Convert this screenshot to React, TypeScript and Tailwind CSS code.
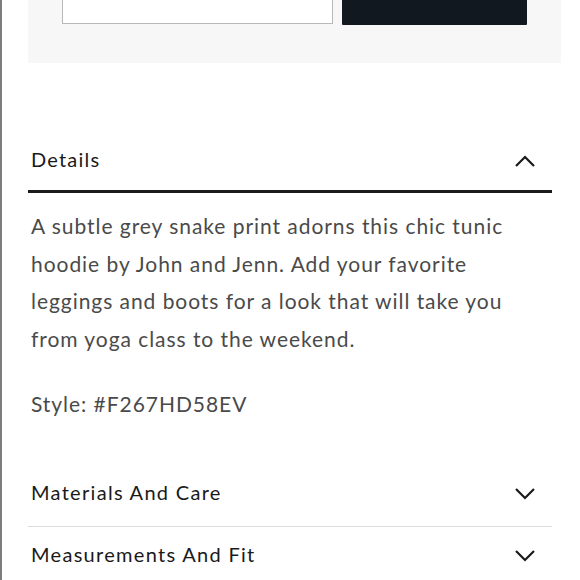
import { useState } from 'react'

const FONT = "font-['Lato','Liberation_Sans',sans-serif]"

function Chevron({ up }: { up?: boolean }) {
  return (
    <svg
      width="20"
      height="12"
      viewBox="0 0 20 12"
      fill="none"
      stroke="#1a1a1a"
      strokeWidth="2.2"
      className="mr-[17px] translate-y-[2px] shrink-0"
    >
      {up ? <polyline points="1,11 10,2 19,11" /> : <polyline points="1,1 10,10 19,1" />}
    </svg>
  )
}

export default function App() {
  const [open, setOpen] = useState<string>('details')

  return (
    <div className={`min-h-[580px] overflow-hidden border-l-2 border-[#7d7d7d] bg-white pl-[26px] ${FONT}`}>
      {/* add-to-bag strip, scrolled mostly out of view */}
      <div className="-mt-[38px] flex w-[533px] gap-[9px] bg-[#f7f7f7] px-[34px] pb-[38px] pt-[14px]">
        <input className="h-[48px] w-[271px] border border-[#b8b8b8] bg-white" />
        <button className="h-[49px] flex-1 rounded-[1px] bg-[#121820]" />
      </div>

      <div className="mt-[82px] w-[524px]">
        <button
          onClick={() => setOpen(open === 'details' ? '' : 'details')}
          className="flex w-full items-center justify-between border-b-[3px] border-[#1b1b1b] pb-[17px] text-left"
        >
          <span className="pl-[3px] text-[20px] leading-[28px] tracking-[1.2px] text-[#1a1a1a]">Details</span>
          <Chevron up={open === 'details'} />
        </button>

        <p className="mt-[14px] pl-[3px] text-[21px] leading-[37.5px] tracking-[0.95px] text-[#4a4a4a]">
          A subtle grey snake print adorns this chic tunic
          <br />
          hoodie by John and Jenn. Add your favorite
          <br />
          leggings and boots for a look that will take you
          <br />
          from yoga class to the weekend.
        </p>
        <p className="mt-[28px] pl-[3px] text-[21px] leading-[37.5px] tracking-[0.95px] text-[#4a4a4a]">
          Style: #F267HD58EV
        </p>

        <button className="mt-[55px] flex w-full items-center justify-between border-b-[1.5px] border-[#dcdcdc] pb-5 text-left">
          <span className="pl-[3px] text-[20px] leading-[28px] tracking-[1.3px] text-[#1a1a1a]">Materials And Care</span>
          <Chevron />
        </button>
        <button className="flex w-full items-center justify-between pt-[13px] text-left">
          <span className="pl-[3px] text-[20px] leading-[28px] tracking-[1.3px] text-[#1a1a1a]">Measurements And Fit</span>
          <Chevron />
        </button>
      </div>
    </div>
  )
}
